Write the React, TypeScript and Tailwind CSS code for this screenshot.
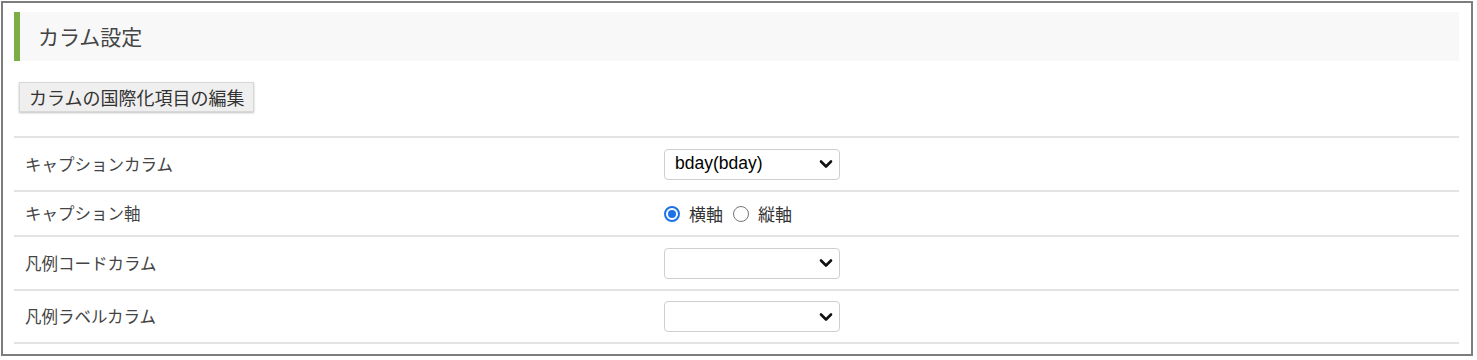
import React from "react";

const FONT = { fontFamily: '"Noto Sans CJK JP", "Noto Sans", sans-serif' };

function Chevron() {
  return (
    <svg width="14" height="10" viewBox="0 0 14 10" className="shrink-0">
      <path d="M2 2.5 L7 7.5 L12 2.5" fill="none" stroke="#111" strokeWidth="2.6" strokeLinecap="round" strokeLinejoin="round" />
    </svg>
  );
}

function SelectBox({ value }: { value?: string }) {
  return (
    <div className="flex items-center justify-between w-[176px] h-[31px] border border-[#cfcfcf] rounded-[4px] bg-white pl-[10px] pr-[6px]">
      <span className="text-[17.5px] text-black leading-none" style={{ fontFamily: '"Liberation Sans", Arial, sans-serif' }}>
        {value}
      </span>
      <Chevron />
    </div>
  );
}

function Radio({ checked, label }: { checked?: boolean; label: string }) {
  return (
    <label className="flex items-center gap-[9px]">
      {checked ? (
        <span className="flex items-center justify-center w-[16px] h-[16px] rounded-full border-2 border-[#1a73e8] bg-white">
          <span className="w-[8px] h-[8px] rounded-full bg-[#1a73e8]" />
        </span>
      ) : (
        <span className="w-[16px] h-[16px] rounded-full border border-[#767676] bg-white" />
      )}
      <span className="text-[17px] text-[#333]">{label}</span>
    </label>
  );
}

function Row({ label, children, h }: { label: string; children: React.ReactNode; h: string }) {
  return (
    <div className={`flex items-center border-b-2 border-[#e3e3e3] ${h}`}>
      <div className="w-[650px] pl-[11px] text-[16.5px] text-[#444]">{label}</div>
      <div className="flex items-center gap-[10px]">{children}</div>
    </div>
  );
}

export default function App() {
  return (
    <div className="w-[1477px] h-[360px] bg-white pt-px pl-px" style={FONT}>
      <div className="w-[1472px] h-[355px] border-2 border-[#7d7d7d] pt-[9px] pl-[11px] pr-[12px]">
        <div className="flex items-center h-[49px] bg-[#f8f8f8] border-l-[6px] border-[#7cae48] pl-[18px]">
          <h2 className="text-[21px] text-[#444]">カラム設定</h2>
        </div>
        <div className="flex pt-[21px] pl-[5px] pb-[24px]">
          <button className="h-[30px] px-[9px] bg-[#efefef] border border-[#d8d8d8] shadow-[0_1px_2px_rgba(0,0,0,0.25)] text-[18px] text-[#333] leading-none">
            カラムの国際化項目の編集
          </button>
        </div>
        <div className="border-t-2 border-[#e3e3e3]">
          <Row label="キャプションカラム" h="h-[54px]">
            <SelectBox value="bday(bday)" />
          </Row>
          <Row label="キャプション軸" h="h-[45px]">
            <Radio checked label="横軸" />
            <Radio label="縦軸" />
          </Row>
          <Row label="凡例コードカラム" h="h-[54px]">
            <SelectBox />
          </Row>
          <Row label="凡例ラベルカラム" h="h-[53px]">
            <SelectBox />
          </Row>
        </div>
      </div>
    </div>
  );
}
